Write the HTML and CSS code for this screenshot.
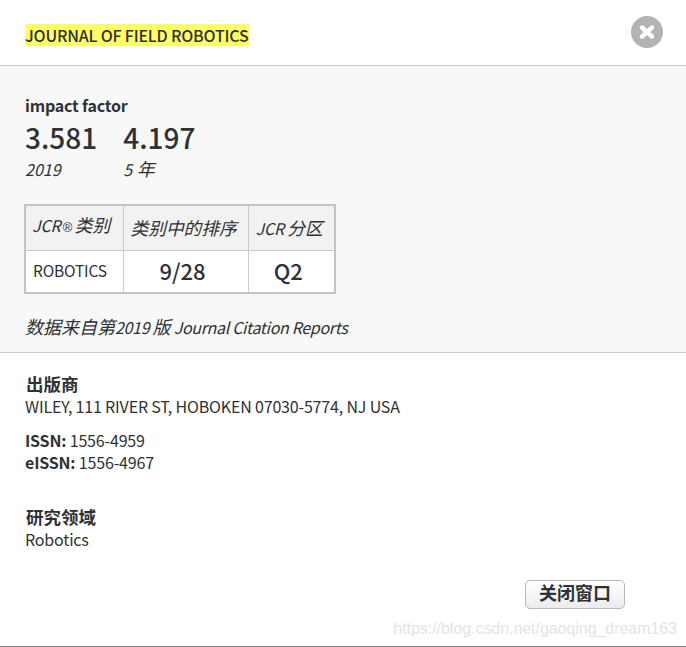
FILE: index.html
```html
<!DOCTYPE html>
<html lang="zh">
<head>
  <meta charset="UTF-8">
  <title>Journal of Field Robotics</title>
  <link rel="stylesheet" href="styles.css">
</head>
<body>
  <div class="dialog">
    <div class="header">
      <h1><mark>JOURNAL OF FIELD ROBOTICS</mark></h1>
      <div class="close">
        <svg width="32" height="32" viewBox="0 0 32 32">
          <circle cx="16" cy="16" r="16" fill="#b3b3b3"/>
          <path d="M11 11.5l10 9M21 11.5l-10 9" stroke="#fff" stroke-width="4.4" stroke-linecap="round"/>
        </svg>
      </div>
    </div>

    <div class="metrics">
      <div class="label">impact factor</div>
      <div class="scores">
        <div class="score">
          <div class="value">3.581</div>
          <div class="period">2019</div>
        </div>
        <div class="score">
          <div class="value">4.197</div>
          <div class="period">5 <span class="cjk">年</span></div>
        </div>
      </div>

      <table class="rank">
        <tr>
          <th class="first">JCR <span class="reg">®</span> <span class="cjk">类别</span></th>
          <th><span class="cjk">类别中的排序</span></th>
          <th>JCR <span class="cjk">分区</span></th>
        </tr>
        <tr>
          <td class="name">ROBOTICS</td>
          <td class="big">9/28</td>
          <td class="big">Q2</td>
        </tr>
      </table>

      <p class="source"><span class="cjk">数据来自第</span>2019 <span class="cjk">版</span> Journal Citation Reports</p>
    </div>

    <div class="info">
      <h2>出版商</h2>
      <p class="publisher">WILEY, 111 RIVER ST, HOBOKEN 07030-5774, NJ USA</p>
      <p class="issn"><b>ISSN:</b> 1556-4959</p>
      <p class="issn"><b>eISSN:</b> 1556-4967</p>
      <h2 class="area">研究领域</h2>
      <p>Robotics</p>
      <div class="actions">
        <button type="button">关闭窗口</button>
      </div>
    </div>

    <div class="watermark">https://blog.csdn.net/gaoqing_dream163</div>
  </div>
</body>
</html>
```

FILE: styles.css
```css
* {
  box-sizing: border-box;
}

html, body {
  margin: 0;
  height: 100%;
}

body {
  font-family: "Noto Sans CJK SC", "Noto Sans", sans-serif;
  font-size: 16px;
  line-height: 22px;
  letter-spacing: -0.17px;
  color: #2f3136;
  background: #fff;
  overflow: hidden;
}

.cjk {
  font-size: 18px;
  letter-spacing: 0;
  line-height: 0;
}

.dialog {
  position: relative;
  height: 647px;
  border-bottom: 1px solid #808080;
}

.header {
  display: flex;
  justify-content: space-between;
  align-items: flex-start;
  height: 66px;
  padding: 16px 23px 0 25px;
  border-bottom: 1px solid #cccccc;
}

h1 {
  margin: 8px 0 0;
  font-size: 16px;
  line-height: 22px;
  font-weight: 500;
  letter-spacing: -0.2px;
}

mark {
  display: block;
  background: #ffff66;
  color: inherit;
}

.close {
  width: 32px;
  height: 32px;
}

.close svg {
  display: block;
}

.metrics {
  height: 287px;
  padding: 28px 25px 0;
  background: #f8f8f8;
  border-bottom: 1px solid #cccccc;
}

.label {
  font-weight: 700;
  letter-spacing: -0.2px;
}

.scores {
  display: flex;
  gap: 26px;
}

.value {
  margin-top: 5px;
  font-size: 28px;
  line-height: 32px;
  font-weight: 500;
  letter-spacing: 0;
}

.period {
  margin-top: 5px;
  font-style: italic;
  letter-spacing: 0;
}

.period .cjk {
  margin-left: 1px;
}

.rank {
  margin: 24px 0 0 -1px;
  width: 312px;
  table-layout: fixed;
  border-collapse: collapse;
  border: 2px solid #c4c4c4;
}

.rank th,
.rank td {
  border: 1px solid #cccccc;
  padding: 0 7px;
}

.rank th {
  height: 45px;
  background: #f2f2f2;
  font-size: 16px;
  font-style: italic;
  font-weight: 400;
  text-align: left;
}

.rank th .cjk {
  font-size: 17.7px;
}

.rank th:nth-child(1) {
  width: 98px;
}

.rank th:nth-child(2) {
  width: 125px;
}

.rank th.first {
  padding: 0 0 5px 6px;
  word-spacing: -1px;
}

.rank .reg {
  font-family: "Liberation Sans", sans-serif;
  font-size: 13px;
  font-style: normal;
  line-height: 0;
}

.rank td {
  height: 43px;
  padding-bottom: 2px;
  background: #fff;
}

.rank .name {
  font-size: 15.5px;
}

.rank .big {
  padding-right: 13px;
  font-size: 22px;
  font-weight: 500;
  text-align: center;
  letter-spacing: 0;
}

.source {
  margin: 22px 0 0;
  font-style: italic;
  letter-spacing: -0.33px;
}

.info {
  padding: 20px 25px 0;
}

h2 {
  margin: 0;
  padding-left: 1px;
  font-size: 17.5px;
  line-height: 22px;
  font-weight: 700;
  letter-spacing: 0;
}

.info p {
  margin: 0;
}

.info .publisher {
  margin-bottom: 12px;
}

.info b {
  font-weight: 700;
}

h2.area {
  margin-top: 33px;
}

.actions {
  display: flex;
  justify-content: flex-end;
  margin-top: 30px;
  padding-right: 36px;
}

button {
  width: 100px;
  height: 29px;
  padding: 0;
  font-family: "Liberation Sans", "Noto Sans CJK SC", sans-serif;
  font-size: 18px;
  font-weight: 700;
  line-height: 27px;
  color: #2f3136;
  background: linear-gradient(#ffffff, #ececec);
  border: 1px solid #b8b8b8;
  border-radius: 5px;
}

.watermark {
  position: absolute;
  right: 9px;
  bottom: 7px;
  font-family: "Liberation Sans", sans-serif;
  font-size: 16px;
  line-height: 20px;
  letter-spacing: -0.05px;
  color: #e4e4e4;
}
```
